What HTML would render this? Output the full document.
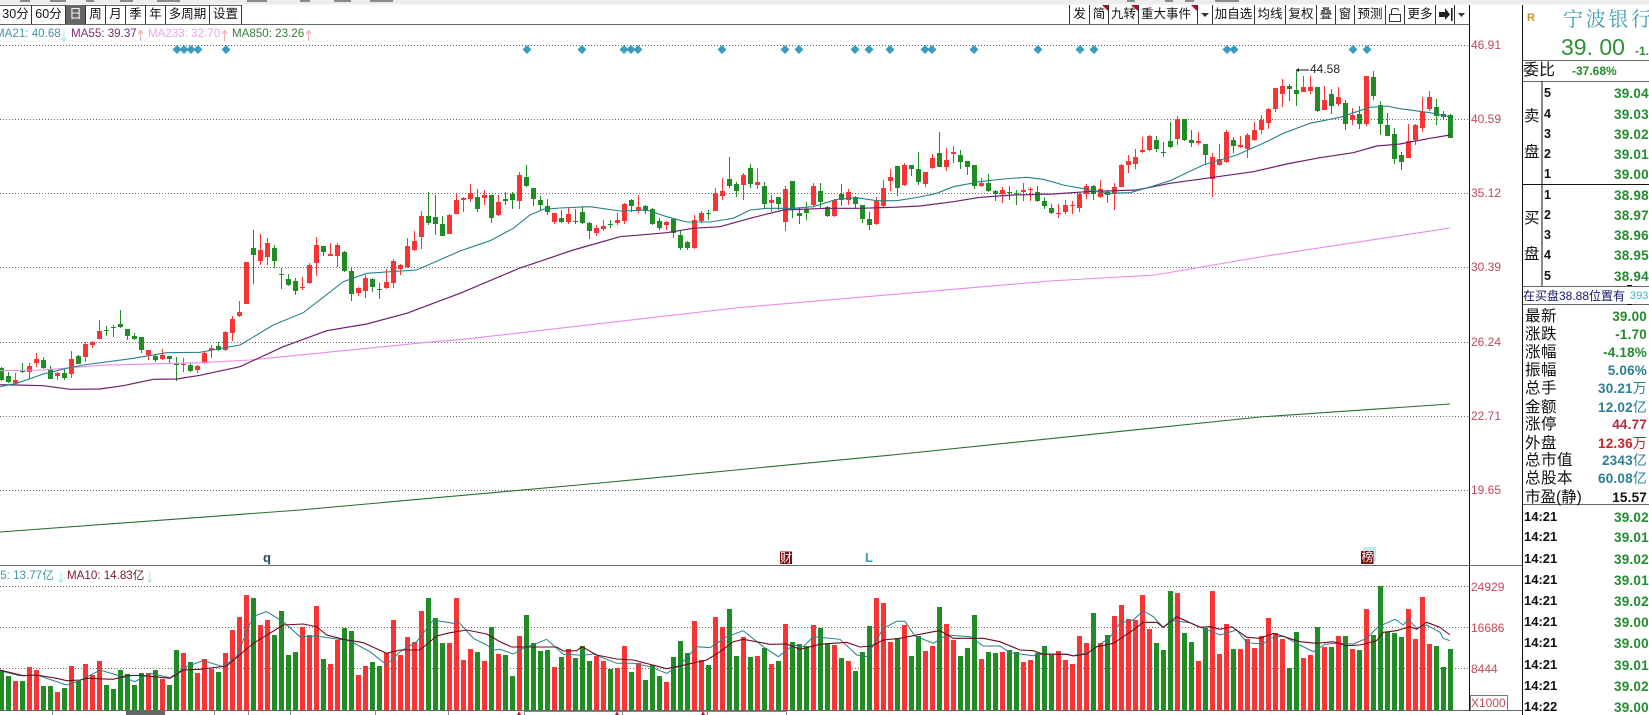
<!DOCTYPE html>
<html><head><meta charset="utf-8"><style>
html,body{margin:0;padding:0;background:#fff;width:1649px;height:715px;overflow:hidden}
body{position:relative;font-family:"Liberation Sans","WenQuanYi Zen Hei","Noto Sans CJK SC",sans-serif}
.a{position:absolute;white-space:nowrap;line-height:16px;height:16px}
.t{position:absolute;top:5px;height:19px;line-height:19px;text-align:center;font-size:12.5px;color:#111;font-family:"Liberation Sans","WenQuanYi Zen Hei","Noto Sans CJK SC",sans-serif;white-space:nowrap;overflow:hidden}
.ax{color:#c2475a;font-size:12px;left:1471px}
.lb{font-size:15.5px;left:1525px;color:#111;letter-spacing:.5px;margin-top:2px}
.bk{font-size:15.5px;left:1524px;color:#111}
.n{font:bold 12.5px "Liberation Sans",sans-serif;line-height:16px;left:1544px;color:#111;margin-top:1px}
.p{font:bold 13.5px "Liberation Sans",sans-serif;line-height:16px;left:1614px;color:#228b2d;letter-spacing:.2px;margin-top:2px}
.tm + .p{margin-top:1px}
.v{font:bold 13.5px "Liberation Sans",sans-serif;line-height:16px;right:2px;color:#228b2d;text-align:right;margin-top:2px;letter-spacing:.2px}
.v i{font:normal 14px "WenQuanYi Zen Hei","Noto Sans CJK SC",sans-serif;line-height:0}
.tm{font:bold 13px "Liberation Sans",sans-serif;line-height:16px;left:1524px;color:#111}
.m{font-size:11.6px;top:26px}
</style></head><body>
<svg id="c" width="1649" height="715" style="position:absolute;left:0;top:0">
<rect x="0" y="0" width="1649" height="4.5" fill="#ededed"/>
<g fill="#8a8a8a"><rect x="20" y="0" width="10" height="2"/><rect x="50" y="0" width="16" height="2"/><rect x="86" y="0" width="8" height="2"/><rect x="120" y="0" width="13" height="2"/><rect x="157" y="0" width="23" height="2"/><rect x="247" y="0" width="20" height="2"/><rect x="300" y="0" width="10" height="2"/><rect x="334" y="0" width="17" height="2"/><rect x="370" y="0" width="23" height="2"/><rect x="1127" y="0" width="8" height="2"/><rect x="1165" y="0" width="8" height="2"/><rect x="1185" y="0" width="9" height="2"/><rect x="1215" y="0" width="24" height="2"/></g>
<path d="M0 5.5H241M0 24.5H1469.5M0 565.5H1522M0 710.5H1522M1523 60.5H1649M1523 81.5H1649M1523 286.5H1649M1523 304.5H1649M1523 504.5H1649" stroke="#666" fill="none"/>
<path d="M1523 184.5H1649M1469.5 5V711M1522.5 5V715M1542 81V286" stroke="#111" fill="none"/>
<path d="M31.5 5V24M65.5 5V24M105.5 5V24M125.5 5V24M145.5 5V24M165.5 5V24M209.5 5V24M241.5 5V24M85.5 5V24M1069.5 5V24M1089.5 5V24M1108.5 5V24M1138.5 5V24M1197.5 5V24M1212.5 5V24M1254.5 5V24M1285.5 5V24M1316.5 5V24M1335.5 5V24M1354.5 5V24M1385.5 5V24M1404.5 5V24M1435.5 5V24M1454.5 5V24" stroke="#333" fill="none"/>
<rect x="66" y="6" width="19" height="18" fill="#666"/>
<path d="M1102 5H1108V11ZM1131 5H1138V11ZM1191 5H1197V11Z" fill="#c0081c"/>
<path d="M1201 13H1209L1205 17ZM1458 13H1465L1461.5 17Z" fill="#333"/>
<path d="M1439 12H1445V8L1450 14.500L1445 20V17H1439Z" fill="#222"/><rect x="1451" y="8" width="1.600" height="13" fill="#222"/>
<path d="M1389.500 14.500H1400.500V21.500H1389.500ZM1391.500 14.500V10.500Q1391.500 8.500 1394 8.500H1396Q1398.500 8.500 1398.500 10.500" stroke="#333" fill="none"/>
<path d="M64 30V41M61.500 37.500L64 41.500L66.500 37.500M60.700 572V582.500M58.200 579L60.700 582.500L63.200 579M149.700 572V582.500M147.200 579L149.700 582.500L152.200 579" stroke="#a4e6ee" fill="none"/>
<path d="M140.700 30.500V41.500M138.200 34L140.700 30.500L143.200 34M224.700 30.500V41.500M222.200 34L224.700 30.500L227.200 34M308.700 30.500V41.500M306.200 34L308.700 30.500L311.200 34" stroke="#f0a0a8" fill="none"/>
<g id="grid" stroke="#666" stroke-dasharray="1 2" fill="none"><path d="M0 45.5H1468M0 119.500H1468M0 193.500H1468M0 267.500H1468M0 342.500H1468M0 416.500H1468M0 490.500H1468M0 586.500H1468M0 627.500H1468M0 668.500H1468"/></g>
<g id="vol" shape-rendering="crispEdges"></g>
<g id="can" shape-rendering="crispEdges"></g>
<g id="lines" fill="none"></g>
<g id="dia" fill="#3a9ac0"></g>
<path d="M1297 70H1309" stroke="#111"/><path d="M1296 70L1299 68V72Z" fill="#111"/>
<rect x="1363" y="547" width="13" height="15" fill="#b8f0f0"/>
<rect x="780" y="551.500" width="12" height="12.500" fill="#7a0c0c"/>
<rect x="1361" y="551" width="12.500" height="13" fill="#7a0c0c"/>
<rect x="1470.500" y="695.500" width="37" height="15" fill="#fff" stroke="#777"/>
<g stroke="#888"><path d="M52.500 711V715M214.500 711V715M248.500 711V715M290.500 711V715M375.500 711V715M448.500 711V715M524.500 711V715M622.500 711V715M707.500 711V715M786.500 711V715M524 711.500H786"/></g>
<rect x="126" y="711" width="39" height="4" fill="#666"/>
<path d="M517 715L519 711L521 715ZM615 715L617 711L619 715ZM701 715L703 711L705 715Z" fill="#d01020"/>
<path d="M1627 285.500H1632M1627 304.500H1632" stroke="#111"/>
</svg>

<div class="t" style="left:0;width:31px">30分</div>
<div class="t" style="left:32px;width:33px">60分</div>
<div class="t" style="left:66px;width:19px;color:#fff">日</div>
<div class="t" style="left:86px;width:19px">周</div>
<div class="t" style="left:106px;width:19px">月</div>
<div class="t" style="left:126px;width:19px">季</div>
<div class="t" style="left:146px;width:19px">年</div>
<div class="t" style="left:166px;width:43px">多周期</div>
<div class="t" style="left:210px;width:31px">设置</div>

<div class="t" style="left:1070px;width:19px">发</div>
<div class="t" style="left:1090px;width:18px">简</div>
<div class="t" style="left:1109px;width:29px">九转</div>
<div class="t" style="left:1139px;width:54px">重大事件</div>
<div class="t" style="left:1213px;width:41px">加自选</div>
<div class="t" style="left:1255px;width:30px">均线</div>
<div class="t" style="left:1286px;width:30px">复权</div>
<div class="t" style="left:1317px;width:18px">叠</div>
<div class="t" style="left:1336px;width:18px">窗</div>
<div class="t" style="left:1355px;width:30px">预测</div>
<div class="t" style="left:1405px;width:30px">更多</div>

<div class="a m" style="left:-5px;color:#3f96a2">MA21: 40.68</div>
<div class="a m" style="left:71px;color:#7c2c74">MA55: 39.37</div>
<div class="a m" style="left:148px;color:#eca6ec">MA233: 32.70</div>
<div class="a m" style="left:232px;color:#3c7c3c">MA850: 23.26</div>

<div class="a" style="left:1310px;top:61px;font-size:12px;color:#222">44.58</div>

<div class="a ax" style="top:37px">46.91</div>
<div class="a ax" style="top:111px">40.59</div>
<div class="a ax" style="top:185px">35.12</div>
<div class="a ax" style="top:259px">30.39</div>
<div class="a ax" style="top:334px">26.24</div>
<div class="a ax" style="top:408px">22.71</div>
<div class="a ax" style="top:482px">19.65</div>
<div class="a ax" style="top:579px">24929</div>
<div class="a ax" style="top:620px">16686</div>
<div class="a ax" style="top:661px">8444</div>
<div class="a ax" style="top:695px">X1000</div>

<div class="a" style="left:263px;top:550px;font-size:13px;font-weight:bold;color:#234a6a">q</div>
<div class="a" style="left:780px;top:550px;width:12px;font-size:12px;color:#fff;text-align:center">财</div>
<div class="a" style="left:865px;top:550px;font-size:13px;font-weight:bold;color:#3a9ab0">L</div>
<div class="a" style="left:1361px;top:549px;width:13px;font-size:12px;color:#fff;text-align:center">榜</div>

<div class="a" style="left:-3px;top:568px;font-size:11.600px;color:#3f96a2">.5: 13.77亿</div>
<div class="a" style="left:67px;top:568px;font-size:11.600px;color:#7a1a2a">MA10: 14.83亿</div>

<!-- right panel -->
<div class="a" style="left:1527px;top:10px;font-size:11px;font-weight:bold;color:#c8912f">R</div>
<div class="a" style="left:1563px;top:5px;height:26px;line-height:26px;font-size:20px;letter-spacing:2.700px;color:#3f9db4;font-family:'Noto Serif CJK SC','Liberation Serif',serif">宁波银行</div>
<div class="a" style="left:1561px;top:33px;height:28px;line-height:28px;font-size:23px;color:#2e9136;font-family:'Liberation Sans',sans-serif">39. 00</div>
<div class="a" style="left:1635px;top:43px;font-size:12px;font-weight:bold;color:#2e9136">-1.</div>
<div class="a lb" style="left:1523px;top:61px;font-size:16px;letter-spacing:0">委比</div>
<div class="a" style="left:1572px;top:63px;font:bold 12px 'Liberation Sans',sans-serif;line-height:16px;color:#228b2d">-37.68%</div>

<div class="a bk" style="top:109px">卖</div><div class="a bk" style="top:145px">盘</div>
<div class="a bk" style="top:211px">买</div><div class="a bk" style="top:247px">盘</div>

<div class="a n" style="top:84px">5</div><div class="a p" style="top:84px">39.04</div>
<div class="a n" style="top:105px">4</div><div class="a p" style="top:105px">39.03</div>
<div class="a n" style="top:125px">3</div><div class="a p" style="top:125px">39.02</div>
<div class="a n" style="top:145px">2</div><div class="a p" style="top:145px">39.01</div>
<div class="a n" style="top:165px">1</div><div class="a p" style="top:165px">39.00</div>
<div class="a n" style="top:186px">1</div><div class="a p" style="top:186px">38.98</div>
<div class="a n" style="top:206px">2</div><div class="a p" style="top:206px">38.97</div>
<div class="a n" style="top:226px">3</div><div class="a p" style="top:226px">38.96</div>
<div class="a n" style="top:246px">4</div><div class="a p" style="top:246px">38.95</div>
<div class="a n" style="top:267px">5</div><div class="a p" style="top:267px">38.94</div>

<div class="a" style="left:1523px;top:288px;font-size:12px;color:#14146e">在买盘38.88位置有</div>
<div class="a" style="left:1630px;top:288px;font-size:11px;color:#3fb0c0">393</div>

<div class="a lb" style="top:307px">最新</div><div class="a v" style="top:307px">39.00</div>
<div class="a lb" style="top:325px">涨跌</div><div class="a v" style="top:325px">-1.70</div>
<div class="a lb" style="top:343px">涨幅</div><div class="a v" style="top:343px">-4.18%</div>
<div class="a lb" style="top:361px">振幅</div><div class="a v" style="top:361px;color:#2a8090">5.06%</div>
<div class="a lb" style="top:379px">总手</div><div class="a v" style="top:379px;color:#2a8090">30.21<i>万</i></div>
<div class="a lb" style="top:398px">金额</div><div class="a v" style="top:398px;color:#2a8090">12.02<i>亿</i></div>
<div class="a lb" style="top:415px">涨停</div><div class="a v" style="top:415px;color:#b42a3c">44.77</div>
<div class="a lb" style="top:434px">外盘</div><div class="a v" style="top:434px;color:#c8202c">12.36<i>万</i></div>
<div class="a lb" style="top:451px">总市值</div><div class="a v" style="top:451px;color:#2a8090">2343<i>亿</i></div>
<div class="a lb" style="top:469px">总股本</div><div class="a v" style="top:469px;color:#2a8090">60.08<i>亿</i></div>
<div class="a lb" style="top:488px;letter-spacing:0">市盈(静)</div><div class="a v" style="top:488px;color:#111">15.57</div>

<div class="a tm" style="top:509px">14:21</div><div class="a p" style="top:509px">39.02</div>
<div class="a tm" style="top:529px">14:21</div><div class="a p" style="top:529px">39.01</div>
<div class="a tm" style="top:551px">14:21</div><div class="a p" style="top:551px">39.02</div>
<div class="a tm" style="top:572px">14:21</div><div class="a p" style="top:572px">39.01</div>
<div class="a tm" style="top:593px">14:21</div><div class="a p" style="top:593px">39.02</div>
<div class="a tm" style="top:614px">14:21</div><div class="a p" style="top:614px">39.00</div>
<div class="a tm" style="top:635px">14:21</div><div class="a p" style="top:635px">39.00</div>
<div class="a tm" style="top:657px">14:21</div><div class="a p" style="top:657px">39.01</div>
<div class="a tm" style="top:678px">14:21</div><div class="a p" style="top:678px">39.02</div>
<div class="a tm" style="top:699px">14:22</div><div class="a p" style="top:699px">39.00</div>

<script>
(function(){
var NS="http://www.w3.org/2000/svg",R="#fa3434",G="#1f8c24";
function el(par,n,a){var e=document.createElementNS(NS,n);for(var k in a)e.setAttribute(k,a[k]);par.appendChild(e);return e}
function rect(p,x,y,w,h,c){el(p,"rect",{x:x,y:y,width:w,height:h,fill:c})}
var v="g480 g498 r513 g513 r471 r480 g528 g528 r546 g534 r468 g513 r462 r495 r453 g525 g537 g480 g492 g525 g489 r489 g480 r507 g525 g420 r429 g456 r489 r447 r477 g486 r429 r360 r321 r255 g264 r345 r330 g375 g303 g435 g426 r351 r375 r288 g447 r462 r390 g354 g363 r495 r468 g456 g468 r429 r330 r435 r381 r396 r303 g264 g324 g399 r399 r264 r450 r417 g426 r453 g351 r432 g435 g498 r378 g315 g399 g423 g420 r471 g441 r417 g444 g408 g453 r438 r453 g477 r474 r408 g486 r459 g510 g465 g498 r516 g441 g393 g429 r333 r450 g465 r321 r352 g297 g438 r381 g441 r438 g414 r462 g453 r342 g396 g402 g408 r345 g354 g399 r405 g444 r453 g483 g426 g348 r264 r279 r396 g384 r345 g438 g378 r423 r408 g291 r342 r390 g438 g414 g315 r447 g426 g429 r426 g420 g426 r456 r450 g429 g408 g435 r423 r450 r462 r378 r399 g309 r399 g375 r318 r285 r327 r330 r255 r357 g399 g420 g243 r249 g369 g396 r453 g354 r243 r432 r342 g417 r417 r387 r414 r378 r324 r369 r387 g474 g366 r444 r435 g351 r411 g411 r378 g378 r417 g420 r297 g375 g228 g366 g369 g381 r297 r387 r261 r402 g408 g471 g417".split(" ");
var vg=document.getElementById("vol");
v.forEach(function(s,k){var y=510+parseInt(s.slice(1))/3;rect(vg,7*k-1,Math.round(y),5,710-Math.round(y),s[0]=="r"?R:G)});
var cg=document.getElementById("can");
var segs=[
[180,0,"g565,602,562,605 g588,606,575,608 r600,610,580,612 g573,576,548,578 r558,575,548,597 r537,550,520,563 g541,566,532,568 g566,595,559,598 r578,587,575,600 g579,593,563,598 r537,581,514,594 g528,551,525,553 r491,531,487,548 r486,495,484,506 r453,477,420,478 g450,453,438,467 g440,442,436,471 g432,442,390,444 g447,468,447,480 g468,477,460,480 g472,510,472,520 r511,525,511,540 g528,541,522,546 r526,537,508,540 g529,537,529,552 g550,556,532,604 r551,553,535,578 g555,573,550,578 r558,570,555,580 r519,549,517,552 r505,511,496,535 g498,511,487,513 r456,509,453,512 r417,459,408,484 r397,408,364,411 r246,372,246,372 g204,225,150,312 r210,243,162,255 r189,231,174,255 g204,243,196,264 g283,287,264,327 g297,315,283,320 g304,333,295,345 r322,325,291,330 r255,309,250,312 r195,249,172,288 g198,216,198,228 r222,228,189,228 r195,228,189,262 g216,273,212,276 g273,342,264,363 r324,339,322,348 r294,333,285,354 g297,321,294,336 g328,332,310,357 r306,324,267,326 r243,309,238,324 r255,267,253,285 r198,261,175,264 r183,210,153,212 r108,171,93,207 g108,129,37,137 g111,132,46,165 g132,168,108,168 r104,160,102,162 r60,102,40,104"],
[120,66,"r233,240,230,276 r219,237,192,245 g231,267,207,276 r225,234,210,255 g225,294,225,309 r246,285,225,287 g237,243,216,255 g222,240,216,267 r165,243,156,267 g171,198,135,201 g204,237,204,258 g240,255,227,272 g258,276,237,285 r279,306,278,312 g294,306,270,310 r282,306,264,312 g303,306,267,312 g276,309,258,312 g309,333,306,357 r324,339,315,348 r318,327,300,333 g312,315,300,324 r300,309,279,315 r252,303,249,312 g240,258,237,276 r261,273,225,279 g258,273,255,282 g267,312,264,315 g303,324,294,330 r306,315,303,330 g297,339,294,354 g345,384,333,390 g366,384,363,390 r300,384,285,387 r279,303,273,309 g279,282,270,300 r219,273,204,273 r213,228,174,240 g177,198,111,204 g192,213,186,231 r165,195,159,240 g144,192,132,204 r186,195,144,207 g198,252,186,264 r240,249,225,276 g231,252,231,270 r207,306,198,333 g183,267,183,294 g279,288,264,312 g267,279,246,300 r198,255,189,258 g213,246,189,264 g261,288,258,292 r240,288,237,291 g222,240,192,258 r216,240,207,255 g231,252,228,264 g255,297,255,309 g297,315,276,330 r243,312,231,315 r204,258,180,261 r171,183,147,213 g138,204,138,228 r135,195,129,198 g135,147,135,168 g147,186,96,195"],
[60,132,"r336,372,336,381 r294,324,282,327 g279,321,216,321 r300,321,264,333 r276,282,258,309 g285,306,270,327 g303,321,303,345 g315,378,315,387 r369,378,354,381 g369,393,342,396 g393,402,390,423 r390,402,381,429 g396,399,378,420 g399,402,390,435 r390,396,369,423 r387,389,380,423 g396,423,378,426 g423,438,411,447 g444,459,432,462 r459,462,432,474 r435,456,420,462 r435,438,423,462 r402,444,399,456 r378,402,372,417 g378,402,375,420 r387,411,360,414 g396,405,390,429 r381,402,369,450 r315,381,312,381 r303,315,285,339 r291,312,267,327 r270,276,231,279 r228,270,225,273 g240,267,228,276 g276,279,246,291 g243,261,186,264 r177,237,168,255 g177,240,177,243 g240,249,210,261 r243,249,216,255 g252,285,252,315 r291,357,279,411 r297,315,252,318 r216,306,210,309 g240,258,231,279 r255,261,228,264 r225,267,219,294 r210,240,186,243 r180,210,165,222 r147,189,144,207 r84,147,84,156 r78,102,57,141 g78,87,72,123 g90,102,30,138 r81,96,48,96 r81,93,48,102 g81,153,81,156 r120,150,78,150 g102,138,87,162 r111,132,81,138 g129,192,120,210 r165,180,144,195 g162,192,138,207 r48,192,48,198 g51,108,33,120 g135,192,123,225 g195,228,159,228 g222,297,204,312"],
[0,200,"g465,486,456,510 r423,474,372,474 r375,420,372,435 r336,384,291,396 r291,327,272,333 g321,348,297,375 g342,351,333,360 g345,414,342,414"]
];
segs.forEach(function(s){
 s[2].split(" ").forEach(function(d,i){
  var k=s[1]+i,c=d[0]=="r"?R:G,a=d.slice(1).split(",").map(function(z){return s[0]+z/3});
  rect(cg,7*k+1,Math.round(a[2]),1,Math.max(1,Math.round(a[3]-a[2])),c);
  rect(cg,7*k-1,Math.round(a[0]),5,Math.max(1,Math.round(a[1]-a[0])),c);
 });
});
var lg=document.getElementById("lines");
function pts(list){var o=[];list.forEach(function(l){l[2].split(" ").forEach(function(p){var q=p.split(",");o.push((l[0]+q[0]/3).toFixed(1)+","+(l[1]+q[1]/3).toFixed(1))})});return o.join(" ")}
function line(l,c,w){el(lg,"polyline",{points:pts(l),stroke:c,"stroke-width":w||1})}
line([[0,0,"0,1596 900,1530 1800,1449 2676,1365 3780,1251 4350,1212"]],"#2a6e30",1.1);
line([[0,180,"0,572 130,570 300,556 600,548 750,540 1000,515 1300,485 1380,479"],[0,0,"2205,924 3150,843 3465,825 3780,771 4350,684"]],"#e88ae8",1.1);
line([[0,180,"0,614 50,615 130,617 210,628 300,627 370,617 460,598 530,597 600,586 720,560 850,500 980,452 1100,432 1220,400 1300,370 1380,340"],[460,180,"180,264"],[460,120,"340,390 480,350 620,338 700,325 780,320 870,295 970,270 1100,265 1200,265 1300,262"],[920,60,"0,438 100,425 180,412 280,405 400,402 500,395 650,390 750,370 880,352 1000,335 1100,312 1200,293 1300,278 1370,258 1440,252"],[1410,0,"60,415 120,405"]],"#6b1f6b",1.2);
line([[0,180,"0,620 50,610 130,582 200,565 250,555 400,535 500,518 600,517 720,495 820,435 910,398 1030,305 1100,280 1250,270 1380,213"],[460,120,"90,362 160,325 210,285 250,268 300,264 390,260 480,273 560,270 620,290 680,306 750,306 820,295 870,270 920,265 1000,265 1060,260 1130,238 1190,233 1250,242 1310,242"],[920,60,"0,411 50,400 100,380 180,365 250,357 320,352 370,358 430,375 500,388 560,400 630,398 700,378 750,362 850,315 950,285 1030,250 1090,220 1170,190 1260,172 1350,142 1400,138 1440,146"],[1410,0,"60,338 120,350"]],"#26808a",1.1);
line([[0,510,"0,482 60,497 110,495 200,525 240,512 300,480 350,495 405,515 450,490 510,503 560,470 610,452 670,470 710,440 750,340 770,315 800,305 850,335 900,380 950,378 1050,393 1110,425 1160,465 1200,425 1250,395 1300,330 1360,340 1375,335 1420,385 1460,405 1480,420"],[500,510,"0,418 40,432 70,415 110,400 140,388 190,433 250,436 280,432 350,460 400,460 450,470 500,490 540,465 590,410 630,413 680,380 730,362 790,410 835,440 880,405 910,410 940,380 1020,388 1070,435 1100,440 1150,355 1190,334 1215,334 1245,378 1300,400 1340,375 1410,380 1450,408"],[1000,510,"0,408 30,428 100,437 130,432 200,432 220,437 270,425 330,382 360,340 400,330 430,302 460,320 490,352 520,332 570,338 610,355 660,375 710,360 740,398 790,402 810,385 850,378 900,405 940,425 975,403 1010,400 1060,402 1100,385 1135,350 1185,328 1210,345 1225,328 1250,355 1280,345 1320,367"],[1410,510,"100,385 120,392"]],"#26808a",1);
line([[0,510,"0,480 40,490 70,497 110,495 170,505 200,512 240,510 260,505 340,508 380,497 420,496 510,505 550,480 600,478 680,468 760,400 850,345 910,342 950,350 980,375 1030,388 1090,398 1160,430 1200,420 1260,420 1310,378 1350,368 1400,360 1460,372"],[500,510,"0,395 35,411 170,411 190,423 230,422 245,410 290,435 350,447 400,450 500,476 530,470 620,450 660,425 700,395 730,388 810,403 860,402 900,418 960,403 1040,397 1080,411 1115,408 1150,390 1200,385 1300,365 1320,362 1360,385 1450,385"],[1000,510,"0,395 60,420 100,422 130,433 200,433 220,438 260,432 290,410 340,400 400,360 430,337 470,337 490,352 530,320 600,352 630,350 660,358 695,350 740,382 780,385 820,370 900,395 950,400 1000,395 1040,407 1080,405 1130,392 1150,367 1190,362 1230,350 1250,358 1280,337 1320,352"],[1410,510,"90,352 120,375"]],"#6e0a1e",1.1);
var dg=document.getElementById("dia");
[177,184,191,198,226,527,582,624,631,638,722,785,799,855,869,890,925,932,974,1038,1080,1094,1227,1234,1353,1367].forEach(function(x){
 el(dg,"path",{d:"M"+x+" 45L"+(x+4.5)+" 49.5L"+x+" 54L"+(x-4.5)+" 49.5Z"});
});
})();
</script>
</body></html>
